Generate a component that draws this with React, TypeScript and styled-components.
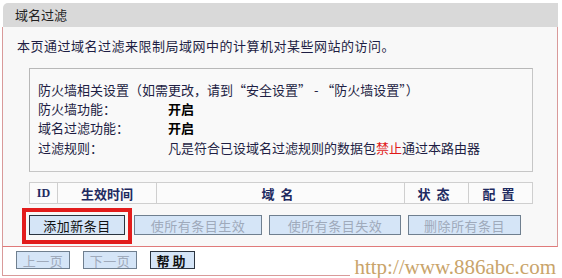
import React from "react";
import styled, { createGlobalStyle } from "styled-components";

const GlobalStyle = createGlobalStyle`
  html, body {
    margin: 0;
    padding: 0;
    background: #ffffff;
  }
  body {
    font-family: "Noto Sans CJK SC", "Noto Sans", sans-serif;
    font-size: 13px;
    color: #1e1e44;
  }
`;

const Frame = styled.div`
  position: relative;
  width: 556px;
  height: 275px;
  margin: 3px 0 0 2px;
`;

const TitleBar = styled.div`
  height: 24px;
  margin-left: 1px;
  padding-left: 12px;
  background: #d9d9d9;
  border-top-left-radius: 5px;
  line-height: 24px;
  font-size: 13px;
  color: #222;
`;

const Panel = styled.div`
  height: 220px;
  box-sizing: border-box;
  padding-top: 11px;
  background: #f8f8f8;
  border-left: 1px solid #d99a9a;
  border-right: 1px solid #d99a9a;
  border-bottom: 1px solid #e07a7a;
`;

const Intro = styled.div`
  padding-left: 14px;
  line-height: 16px;
  letter-spacing: 0.5px;
`;

const InfoBox = styled.div`
  width: 504px;
  height: 104px;
  box-sizing: border-box;
  margin: 14px 0 0 26px;
  padding: 11px 0 0 8px;
  border: 1px solid #c6c6c6;
  border-top-color: #b8b8b8;
  border-left-color: #b8b8b8;
  background: #f9f9f9;
`;

const InfoRow = styled.div`
  display: grid;
  grid-template-columns: 130px 1fr;
  line-height: 19.2px;
  white-space: nowrap;
`;

const Value = styled.span<{ $bold?: boolean }>`
  font-weight: ${(p) => (p.$bold ? 700 : 400)};
  color: ${(p) => (p.$bold ? "#000" : "inherit")};
`;

const Forbid = styled.span`
  color: #e01818;
`;

const HeadRow = styled.div`
  display: grid;
  grid-template-columns: 28px 99px 248px 64px 65px;
  width: 504px;
  height: 22px;
  margin: 10px 0 0 26px;
  box-sizing: border-box;
  border: 1px solid #cfcfcf;
  background: #fbfbfb;
`;

const HeadCell = styled.div<{ $spaced?: boolean }>`
  display: flex;
  align-items: center;
  justify-content: center;
  border-right: 1px solid #cfcfcf;
  font-weight: 700;
  font-size: 13px;
  letter-spacing: ${(p) => (p.$spaced ? "6px" : "0")};
  color: #1e2a60;
  &:last-child {
    border-right: none;
  }
`;

const IdCell = styled(HeadCell)`
  font-family: "Liberation Serif", serif;
  font-size: 12px;
`;

const ButtonRow = styled.div`
  position: relative;
  display: flex;
  gap: 7px;
  margin: 11px 0 0 26px;
`;

const Btn = styled.button<{ $w: number; $disabled?: boolean; $bold?: boolean; $h?: number }>`
  width: ${(p) => p.$w}px;
  height: ${(p) => p.$h ?? 20}px;
  padding: 0;
  margin: 0;
  box-sizing: border-box;
  border: 1px solid ${(p) => (p.$disabled ? "#6f7f8f" : "#2a3440")};
  background: #d5e5f7;
  font-family: "Noto Sans CJK SC", sans-serif;
  font-size: 13px;
  font-weight: ${(p) => (p.$bold ? 700 : 400)};
  letter-spacing: ${(p) => (p.$bold ? "3px" : "0.5px")};
  color: ${(p) => (p.$disabled ? "#9faabb" : "#111")};
  line-height: 1;
  cursor: default;
`;

const FirstBtn = styled(Btn)`
  margin-right: 2px;
`;

const Highlight = styled.div`
  position: absolute;
  left: -7px;
  top: -7px;
  width: 110px;
  height: 36px;
  box-sizing: border-box;
  border: 4px solid #e21c1c;
  pointer-events: none;
`;

const Footer = styled.div`
  display: flex;
  gap: 13px;
  height: 29px;
  box-sizing: border-box;
  padding: 4px 0 0 13px;
  border-left: 1px solid #d99a9a;
  border-bottom: 1px solid #d99a9a;
`;

const Watermark = styled.div`
  position: absolute;
  right: 0;
  bottom: 0;
  padding: 0 2px 0 4px;
  background: #ffffff;
  font-family: "Liberation Serif", serif;
  font-size: 21px;
  line-height: 22px;
  color: #c9a46a;
`;

export default function App() {
  return (
    <>
      <GlobalStyle />
      <Frame>
        <TitleBar>域名过滤</TitleBar>
        <Panel>
          <Intro>本页通过域名过滤来限制局域网中的计算机对某些网站的访问。</Intro>
          <InfoBox>
            <InfoRow>
              <span>防火墙相关设置（如需更改，请到“安全设置” - “防火墙设置”）</span>
            </InfoRow>
            <InfoRow>
              <span>防火墙功能：</span>
              <Value $bold>开启</Value>
            </InfoRow>
            <InfoRow>
              <span>域名过滤功能：</span>
              <Value $bold>开启</Value>
            </InfoRow>
            <InfoRow>
              <span>过滤规则：</span>
              <Value>
                凡是符合已设域名过滤规则的数据包<Forbid>禁止</Forbid>通过本路由器
              </Value>
            </InfoRow>
          </InfoBox>
          <HeadRow>
            <IdCell>ID</IdCell>
            <HeadCell>生效时间</HeadCell>
            <HeadCell $spaced>域名</HeadCell>
            <HeadCell $spaced>状态</HeadCell>
            <HeadCell $spaced>配置</HeadCell>
          </HeadRow>
          <ButtonRow>
            <FirstBtn $w={96}>添加新条目</FirstBtn>
            <Btn $w={128} $disabled>使所有条目生效</Btn>
            <Btn $w={132} $disabled>使所有条目失效</Btn>
            <Btn $w={113} $disabled>删除所有条目</Btn>
            <Highlight />
          </ButtonRow>
        </Panel>
        <Footer>
          <Btn $w={54} $h={18} $disabled>上一页</Btn>
          <Btn $w={54} $h={18} $disabled>下一页</Btn>
          <Btn $w={45} $h={18} $bold>帮助</Btn>
        </Footer>
        <Watermark>http://www.886abc.com</Watermark>
      </Frame>
    </>
  );
}
